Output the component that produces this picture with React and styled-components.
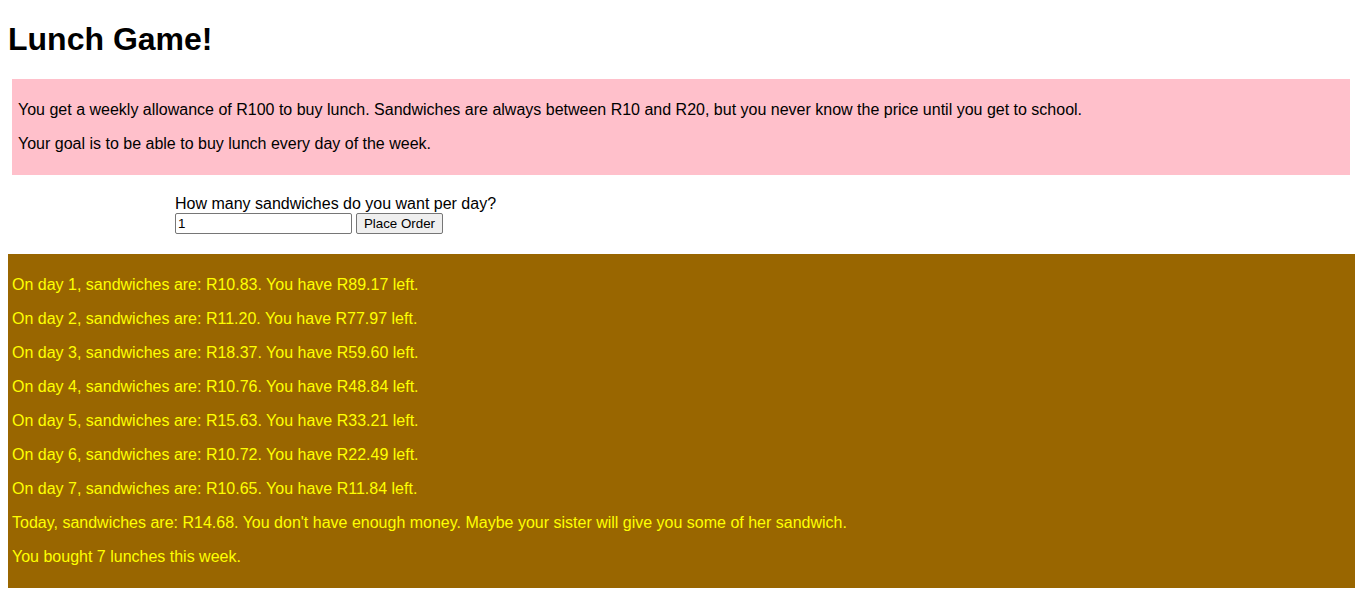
import React, { useState } from 'react'
import styled, { createGlobalStyle } from 'styled-components'

const GlobalStyle = createGlobalStyle`
    body {
        margin: 8px;
        font-family: "Liberation Sans", Arial, sans-serif;
        font-size: 16px;
        color: #000;
        background: #fff;
    }
`

const Title = styled.h1`
    font-size: 32px;
    font-weight: bold;
    margin: 13px 0 21px;
    line-height: 37px;
`

const Intro = styled.div`
    background: pink;
    padding: 6px;
    margin: 0 5px 0 4px;
`

const Para = styled.p`
    margin: 16px 0;
    line-height: 18px;
`

const OrderForm = styled.form`
    margin: 20px 0;
    padding-left: 167px;
`

const Label = styled.label`
    display: block;
    line-height: 18px;
`

const Row = styled.div`
    display: flex;
    gap: 4px;
    align-items: center;
`

const Input = styled.input`
    box-sizing: border-box;
    width: 177px;
    height: 21px;
    margin: 0;
    padding: 1px 2px;
    font-family: "Liberation Sans", Arial, sans-serif;
    font-size: 13.333px;
    border: 1px solid #767676;
    border-radius: 2px;
`

const OrderButton = styled.button`
    box-sizing: border-box;
    width: 87px;
    height: 21px;
    margin: 0;
    padding: 1px 6px;
    font-family: "Liberation Sans", Arial, sans-serif;
    font-size: 13.333px;
    background: #efefef;
    border: 1px solid #767676;
    border-radius: 2px;
    color: #000;
`

const Results = styled.div`
    background: #996600;
    color: yellow;
    padding: 6px;
    margin: 0 -1px 0 -2px;
`

const days = [
    ['10.83', '89.17'],
    ['11.20', '77.97'],
    ['18.37', '59.60'],
    ['10.76', '48.84'],
    ['15.63', '33.21'],
    ['10.72', '22.49'],
    ['10.65', '11.84'],
]

const App = () => {
    const [count, setCount] = useState('1')

    return (
        <>
            <GlobalStyle />
            <Title>Lunch Game!</Title>
            <Intro>
                <Para>You get a weekly allowance of R100 to buy lunch. Sandwiches are always between R10 and R20, but you never know the price until you get to school.</Para>
                <Para>Your goal is to be able to buy lunch every day of the week.</Para>
            </Intro>
            <OrderForm onSubmit={e => e.preventDefault()}>
                <Label htmlFor="count">How many sandwiches do you want per day?</Label>
                <Row>
                    <Input id="count" value={count} onChange={e => setCount(e.target.value)} />
                    <OrderButton type="submit">Place Order</OrderButton>
                </Row>
            </OrderForm>
            <Results>
                {days.map(([price, left], i) => (
                    <Para key={i}>On day {i + 1}, sandwiches are: R{price}. You have R{left} left.</Para>
                ))}
                <Para>Today, sandwiches are: R14.68. You don't have enough money. Maybe your sister will give you some of her sandwich.</Para>
                <Para>You bought 7 lunches this week.</Para>
            </Results>
        </>
    )
}

export default App
